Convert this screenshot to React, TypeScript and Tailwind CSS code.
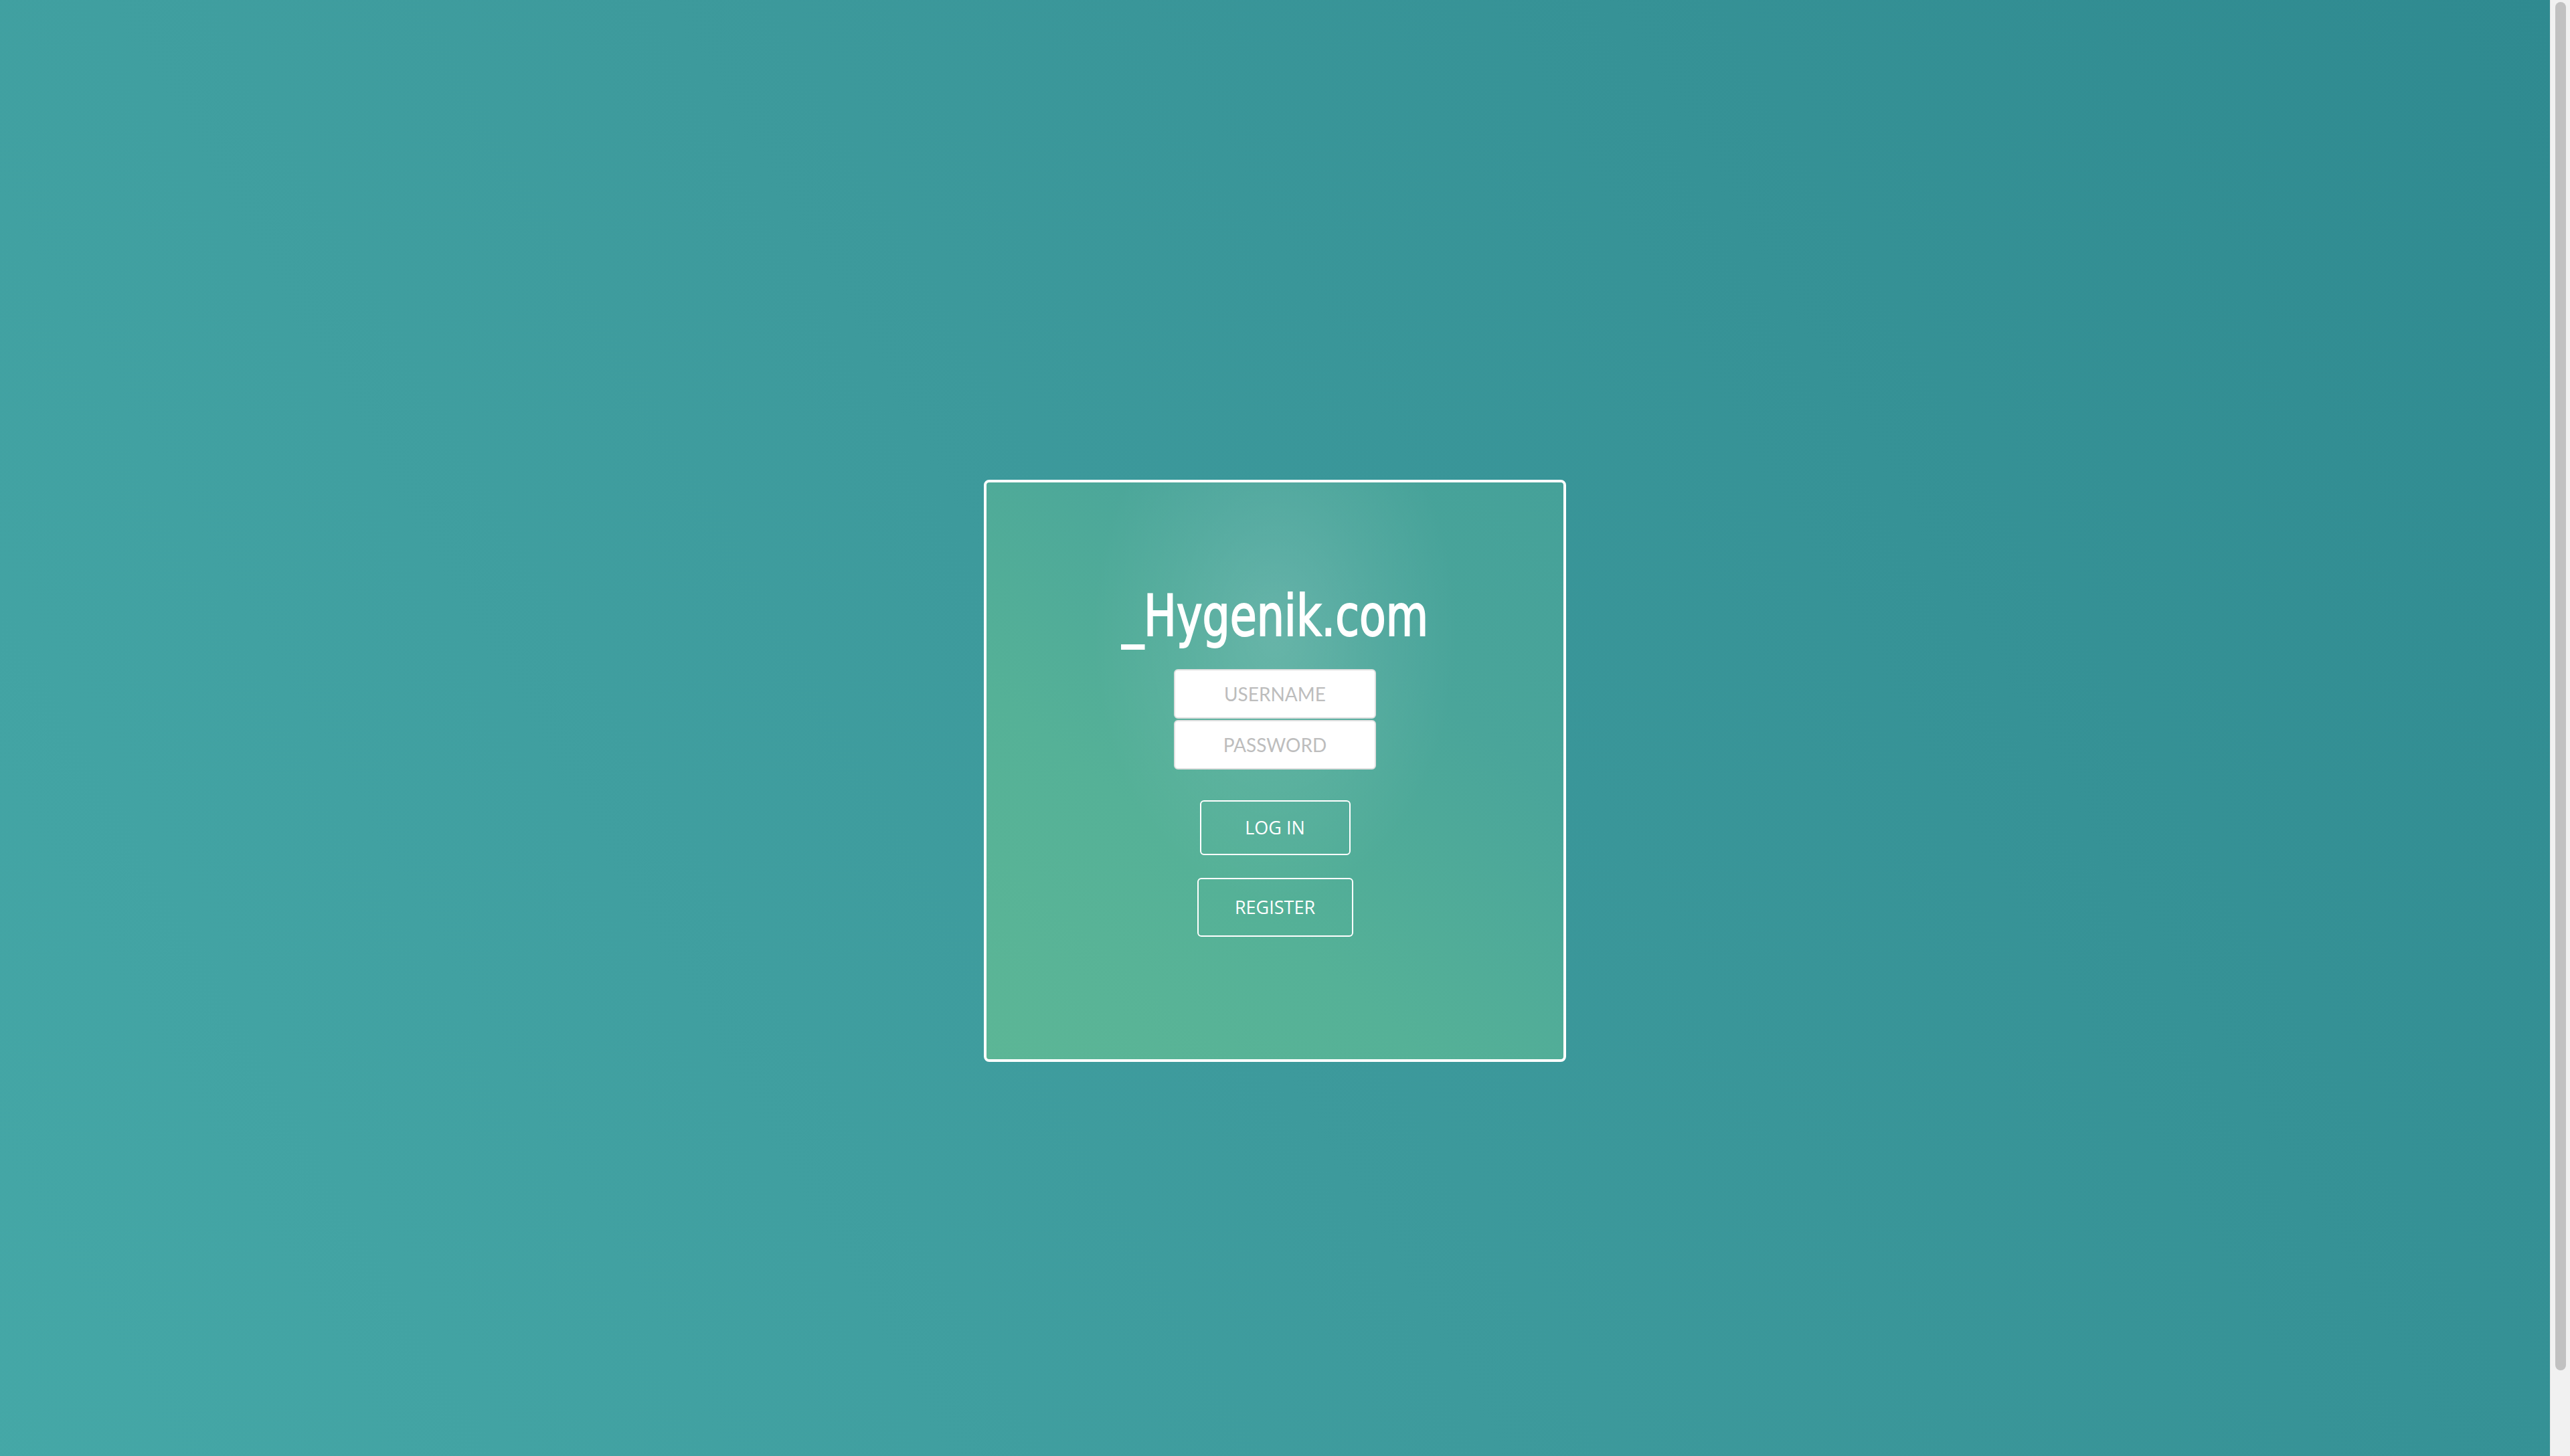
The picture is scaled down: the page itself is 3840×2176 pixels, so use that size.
export default function App() {
  return (
    <div className="flex h-[2176px] w-full overflow-hidden">
      <main className="flex h-[2304px] flex-1 items-center justify-center bg-[linear-gradient(60deg,#45a8a7_0%,#3d9a9c_45%,#2f8a90_100%)]">
        <div className="flex h-[870px] w-[870px] flex-col items-center rounded-[8px] border-4 border-white bg-[radial-gradient(ellipse_at_50%_26%,rgba(255,255,255,0.15)_0%,rgba(255,255,255,0.06)_25%,rgba(255,255,255,0)_45%),linear-gradient(40deg,#5cb696_0%,#55b197_35%,#4aa59a_70%,#45a199_100%)] pt-[156px]">
          <h1 className="scale-x-[0.84] text-[86px] leading-none text-white [-webkit-text-stroke:2px_white] [font-family:'DejaVu_Sans_Condensed','DejaVu_Sans',sans-serif]">
            _Hygenik.com
          </h1>
          <form className="mt-[37px] flex flex-col items-center">
            <div className="flex flex-col gap-[2px]">
              <input
                type="text"
                placeholder="USERNAME"
                className="h-[74px] w-[302px] rounded-[6px] border-2 border-[#e0e0e0] bg-white text-center text-[28px] text-[#555] outline-none placeholder:text-[#bdbdbd] [font-family:Lato,sans-serif]"
              />
              <input
                type="password"
                placeholder="PASSWORD"
                className="h-[74px] w-[302px] rounded-[6px] border-2 border-[#e0e0e0] bg-white text-center text-[28px] text-[#555] outline-none placeholder:text-[#bdbdbd] [font-family:Lato,sans-serif]"
              />
            </div>
            <button
              type="button"
              className="mt-[46px] h-[82px] w-[225px] rounded-[6px] border-2 border-white text-[27px] font-normal text-white [font-family:'Open_Sans',sans-serif]"
            >
              LOG IN
            </button>
            <button
              type="button"
              className="mt-[34px] h-[88px] w-[233px] rounded-[6px] border-2 border-white text-[27px] font-normal text-white [font-family:'Open_Sans',sans-serif]"
            >
              REGISTER
            </button>
          </form>
        </div>
      </main>
      {/* scrollbar */}
      <div className="h-full w-[30px] shrink-0 border-l border-[#e6e6e6] bg-[#f1f1f1] pl-[7px] pt-[3px]">
        <div className="h-[2045px] w-[16px] rounded-full bg-[#c1c1c1]" />
      </div>
    </div>
  );
}
